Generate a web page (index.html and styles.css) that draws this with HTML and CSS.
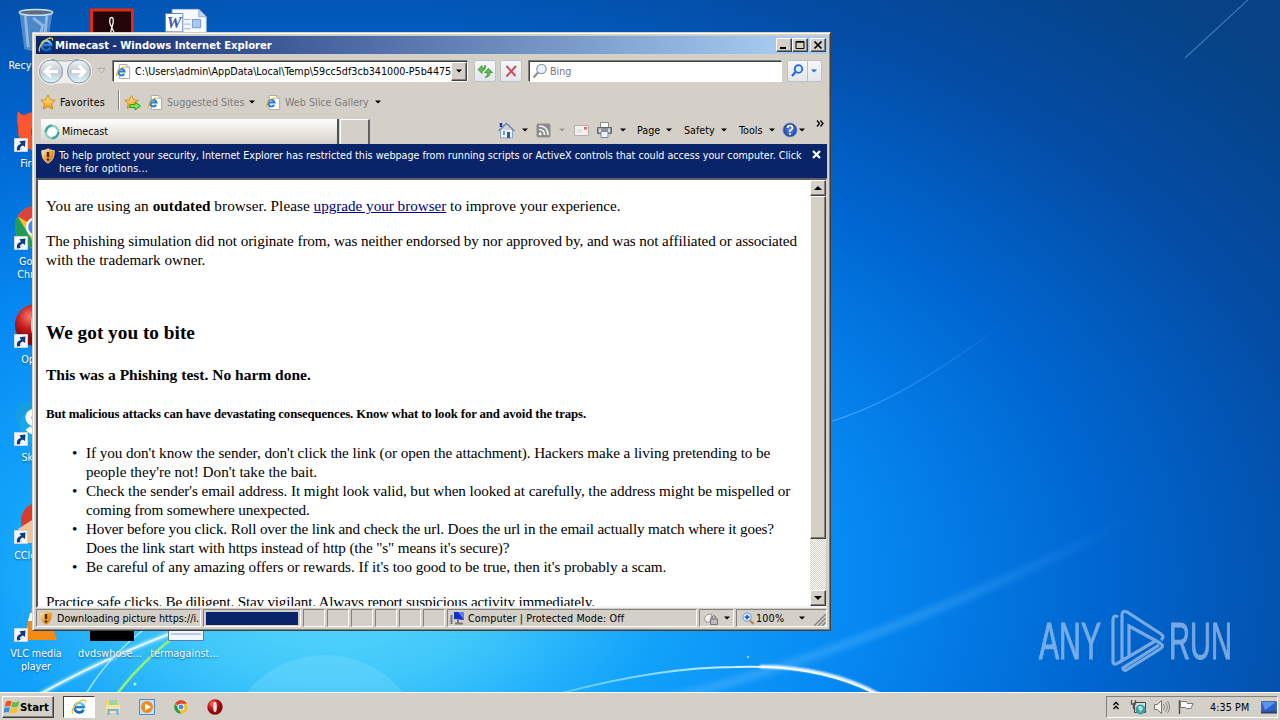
FILE: index.html
```html
<!DOCTYPE html>
<html lang="en">
<head>
<meta charset="utf-8">
<title>Mimecast - Windows Internet Explorer</title>
<link rel="stylesheet" href="styles.css">
</head>
<body>
<svg class="defs" width="0" height="0" aria-hidden="true">
  <defs>
    <linearGradient id="gIe" x1="0" y1="0" x2="0" y2="1"><stop offset="0" stop-color="#6fd0fa"/><stop offset="1" stop-color="#0a5fc0"/></linearGradient>
    <linearGradient id="gGold" x1="0" y1="0" x2="0" y2="1"><stop offset="0" stop-color="#fff0a0"/><stop offset="1" stop-color="#f09a10"/></linearGradient>
    <linearGradient id="gShield" x1="0" y1="0" x2="1" y2="1"><stop offset="0" stop-color="#fff4d8"/><stop offset=".5" stop-color="#f0a030"/><stop offset="1" stop-color="#c87010"/></linearGradient>
    <linearGradient id="gBtn" x1="0" y1="0" x2="0" y2="1"><stop offset="0" stop-color="#f4f6f8"/><stop offset=".5" stop-color="#c3cbd3"/><stop offset="1" stop-color="#dcf4fa"/></linearGradient>
    <radialGradient id="gHelp"><stop offset="0" stop-color="#5d8ee8"/><stop offset="1" stop-color="#1c3f9c"/></radialGradient>
    <radialGradient id="gRed" cx=".35" cy=".3"><stop offset="0" stop-color="#f07a70"/><stop offset=".6" stop-color="#c81a1a"/><stop offset="1" stop-color="#8a0808"/></radialGradient>
    <symbol id="ie" viewBox="0 0 16 16">
      <path d="M12.6 10.6A4.8 4.8 0 1 1 13 8H4" fill="none" stroke="url(#gIe)" stroke-width="2.6"/>
      <path d="M4 8.2h9" stroke="#1f7cd6" stroke-width="2"/>
      <path d="M2 14.4C-.5 12 4 4.500 10 1.700c3-1.300 5-.9 4.400 1.800" fill="none" stroke="#f2c230" stroke-width="1.400"/>
    </symbol>
    <symbol id="iepage" viewBox="0 0 16 16">
      <path d="M3.500.5h8l3 3v12h-11z" fill="#fff" stroke="#a8a8a8"/><path d="M11.500.5v3h3" fill="#e4e4e4" stroke="#a8a8a8"/>
      <path d="M8.800 10.500A3.500 3.500 0 1 1 9.200 8H2.500" fill="none" stroke="#1f7cd6" stroke-width="2"/>
      <path d="M1 13C-.5 11 3 5 7 3.500c2-.7 3-.3 2.800 1" fill="none" stroke="#e8b020" stroke-width="1.200"/>
    </symbol>
    <symbol id="star" viewBox="0 0 16 16"><path d="M8 1l2.200 4.700 5 .6-3.700 3.500 1 5.200L8 12.400 3.500 15l1-5.200L.8 6.300l5-.6z" fill="url(#gGold)" stroke="#d08a14" stroke-width="1"/></symbol>
    <symbol id="shield" viewBox="0 0 14 16"><path d="M7 .8C9 2 11 2.500 13.200 2.500c.2 6-1.200 10-6.200 12.700C2 12.500.6 8.500.8 2.500 3 2.500 5 2 7 .8z" fill="url(#gShield)" stroke="#d8c8a8"/><path d="M7 4v5" stroke="#4a2a00" stroke-width="2.400"/><circle cx="7" cy="11.500" r="1.300" fill="#4a2a00"/></symbol>
    <symbol id="dd" viewBox="0 0 6 4"><path d="M0 .5h6L3 3.500z" fill="currentColor"/></symbol>
    <symbol id="chrome" viewBox="0 0 48 48"><circle cx="24" cy="24" r="23" fill="#f2c42c"/><path d="M24 24L4 12.500A23 23 0 0 1 44 12.500H24z" fill="#dc4437"/><path d="M4 12.500l13 21L24 47A23 23 0 0 1 4 12.500z" fill="#1f9d58"/><circle cx="24" cy="24" r="11" fill="#fff"/><circle cx="24" cy="24" r="8.500" fill="#4285f4"/></symbol>
    <symbol id="opera" viewBox="0 0 48 48"><circle cx="24" cy="24" r="23" fill="url(#gRed)"/><ellipse cx="24" cy="24" rx="5.500" ry="16" fill="#f4dede"/></symbol>
    <symbol id="shortcut" viewBox="0 0 14 14"><path d="M.5.5h13v13H.5z" fill="#f4f8fc" stroke="#c8d4e0"/><path d="M3 12.500C2.500 8.500 4 6.500 7 6L5.500 3.200l6-.7L11 9 8.900 7.500C6.500 8 5.500 10 6.500 12z" fill="#123c80"/></symbol>
  </defs>
</svg>

<main class="desktop">
  <svg class="wallpaper" viewBox="0 0 1280 693" preserveAspectRatio="none" aria-hidden="true">
    <defs>
      <radialGradient id="sky" gradientUnits="userSpaceOnUse" cx="0" cy="0" r="1" gradientTransform="translate(330 580) scale(1250 790)">
        <stop offset="0" stop-color="#5cd8fb"/><stop offset=".13" stop-color="#40c8fa"/><stop offset=".27" stop-color="#12a2fa"/><stop offset=".42" stop-color="#0689f3"/><stop offset=".62" stop-color="#0066d0"/><stop offset=".81" stop-color="#044ca4"/><stop offset="1" stop-color="#064284"/>
      </radialGradient>
      <linearGradient id="arc" x1="560" y1="0" x2="880" y2="0" gradientUnits="userSpaceOnUse"><stop offset="0" stop-color="#9ae6ff" stop-opacity=".5"/><stop offset=".6" stop-color="#d8f5ff"/><stop offset="1" stop-color="#fff"/></linearGradient>
      <linearGradient id="thin" x1="832" y1="0" x2="1010" y2="0" gradientUnits="userSpaceOnUse"><stop offset="0" stop-color="#68c0ff" stop-opacity=".6"/><stop offset="1" stop-color="#68c0ff" stop-opacity="0"/></linearGradient>
      <linearGradient id="band" x1="700" y1="0" x2="1130" y2="0" gradientUnits="userSpaceOnUse"><stop offset="0" stop-color="#58b8ff" stop-opacity=".5"/><stop offset=".5" stop-color="#58b8ff" stop-opacity=".4"/><stop offset="1" stop-color="#58b8ff" stop-opacity="0"/></linearGradient>
      <filter id="soft" x="-10%" y="-50%" width="120%" height="200%"><feGaussianBlur stdDeviation="3"/></filter>
      <filter id="glow" x="-10%" y="-30%" width="120%" height="160%"><feGaussianBlur stdDeviation="1"/></filter>
    </defs>
    <rect width="1280" height="693" fill="url(#sky)"/>
    <circle cx="325" cy="755" r="100" fill="#9ceaff" opacity=".22"/>
    <path d="M640 705Q850 660 1130 520" fill="none" stroke="url(#band)" stroke-width="8" filter="url(#soft)"/>
    <path d="M832 421Q905 399 1005 322" fill="none" stroke="url(#thin)" stroke-width="1.200"/>
    <path d="M1185 58L1250 -2" fill="none" stroke="#5c9cd8" stroke-width="1.200" opacity=".6"/>
    <path d="M40 694Q125 647 210 620" fill="none" stroke="#fff" stroke-width="5" opacity=".4" filter="url(#glow)"/>
    <path d="M40 694Q125 647 210 620" fill="none" stroke="#dcf8ff" stroke-width="2"/>
    <path d="M86 694Q112 650 160 618" fill="none" stroke="#c8f4ff" stroke-width="1.500" opacity=".8"/>
    <path d="M117 694Q140 663 180 632" fill="none" stroke="#90f078" stroke-width="2.500"/>
    <path d="M558 694Q660 667 735 667Q820 664 880 696" fill="none" stroke="url(#arc)" stroke-width="1.800"/>
    <path d="M760 666.500Q830 667 880 695" fill="none" stroke="#fff" stroke-width="3" filter="url(#glow)"/>
    <circle cx="748" cy="657" r="1.200" fill="#90d8ff"/><circle cx="135" cy="684" r="1.500" fill="#b8f4f4"/>
  </svg>

  <div class="icon c1 r1"><svg viewBox="0 0 40 46" class="art"><path d="M3 4l5 38q12 5 23 0l6-38z" fill="#5a92cc" opacity=".85"/><path d="M9 8l3 32M31 8l-3 32M17 10l10 8-5 18" stroke="#a8ccec" stroke-width="3" fill="none" opacity=".7"/><ellipse cx="20" cy="4.500" rx="17" ry="3" fill="#5c6c80" stroke="#c8e0f4" stroke-width="1.500"/></svg><span class="label nw">Recycle Bin</span></div>
  <div class="icon c2 r1"><svg viewBox="0 0 44 44" class="art adobe"><path d="M1.500 1.500h41v41h-41z" fill="#24060a" stroke="#e02814" stroke-width="3"/><path d="M20 26l3-11q1-6-1.500-6T20 15l5 11" fill="none" stroke="#f4f0f0" stroke-width="1.300"/></svg></div>
  <div class="icon c3 r1"><svg viewBox="0 0 48 48" class="art word"><path d="M9 1h29l8 8v38H9z" fill="#f6faff" stroke="#c0cce0"/><path d="M38 1v8h8" fill="#c4d4ec" stroke="#8ea8d0"/><path d="M22 12h7M22 17h7M22 22h7" stroke="#8fb0e0"/><path d="M31 12h9v9h-9z" fill="#a8c8f0" stroke="#6c94d0"/><path d="M1.500 5.500h19v20h-19z" fill="#fff" stroke="#5a78b8"/><text x="3" y="21" class="word-w">W</text></svg></div>
  <div class="icon c1 r2"><svg viewBox="0 0 44 44" class="art"><circle cx="24" cy="24" r="20" fill="#f05a28"/><path d="M4 4q3 4 6 4 5-3 10-1l8 6-14 22Q0 22 4 4z" fill="#ff5530"/><circle cx="28" cy="25" r="11" fill="#6b3fc0"/></svg><svg class="sc"><use href="#shortcut"/></svg><span class="label">Firefox</span></div>
  <div class="icon c1 r3"><svg class="art"><use href="#chrome"/></svg><svg class="sc"><use href="#shortcut"/></svg><span class="label">Google<br>Chrome</span></div>
  <div class="icon c1 r4"><svg class="art"><use href="#opera"/></svg><svg class="sc"><use href="#shortcut"/></svg><span class="label">Opera</span></div>
  <div class="icon c1 r5"><svg class="art" viewBox="0 0 44 44"><circle cx="15" cy="15" r="14" fill="#159fe0"/><circle cx="24" cy="25" r="18" fill="#18a9ec"/><path d="M30 13c-10-6-18 0-15 6s15 5 14 10-11 3-15-2" fill="none" stroke="#fff" stroke-width="6"/></svg><svg class="sc"><use href="#shortcut"/></svg><span class="label">Skype</span></div>
  <div class="icon c1 r6"><svg class="art" viewBox="0 0 44 44"><circle cx="26" cy="22" r="19" fill="#d83a2c"/><path d="M4 30l14-9 12 7v16H12z" fill="#f0c496"/></svg><svg class="sc"><use href="#shortcut"/></svg><span class="label">CCleaner</span></div>
  <div class="icon c1 r7"><svg class="art" viewBox="0 0 44 44"><path d="M6 31h33l4 12H2z" fill="#f58a14"/><path d="M20 2h8l8 34H11z" fill="#f28a20"/><path d="M16 16h16l2 8H14z" fill="#fff"/></svg><svg class="sc"><use href="#shortcut"/></svg><span class="label">VLC media player</span></div>
  <div class="icon c2 r7"><svg class="art dark" viewBox="0 0 44 44"><path d="M0 0h44v44H0z"/></svg><span class="label">dvdswhose...</span></div>
  <div class="icon c3 r7"><svg class="art" viewBox="0 0 36 44"><path d="M.5.500h35v43H.500z" fill="#f2f7ff" stroke="#6078b0"/><path d="M3 37h30" stroke="#7c9ce0"/></svg><span class="label">termagainst...</span></div>

  <div class="watermark" aria-label="ANY RUN"><span class="wm-text any">ANY</span><svg viewBox="0 0 56 64" class="wm-logo"><path d="M8 8q-5-3-5 3v41q0 5 5 2l5-3M12 51V6q0-5 5-3l34 22q4 3 0 6M19 47V17l31 17q5 3 0 6L18 60q-4 3-5-1l36-23M8 54l39-23" fill="none" stroke="currentColor" stroke-width="3.200"/></svg><span class="wm-text run">RUN</span></div>

  <section class="window">
    <header class="title"><svg class="i16"><use href="#ie"/></svg><h1>Mimecast - Windows Internet Explorer</h1>
      <span class="caps"><span class="btn cap"><svg viewBox="0 0 12 10"><path d="M2 8h6" stroke="#000" stroke-width="2"/></svg></span><span class="btn cap"><svg viewBox="0 0 12 10"><path d="M2 1.500h8v7H2zM2 2.200h8" fill="none" stroke="#000"/></svg></span><span class="btn cap close"><svg viewBox="0 0 12 10"><path d="M2.500 1.500l7 7M9.500 1.500l-7 7" stroke="#000" stroke-width="1.700"/></svg></span></span>
    </header>

    <div class="nav">
      <svg class="backfwd" viewBox="0 0 54 27"><path d="M13 0q14 4 28 0 13 2 13 13T41 27q-14-4-28 0Q0 24 0 13T13 0z" fill="#eef1f3" opacity=".9"/><path d="M13 1q14 4 28 0" stroke="#9ba2aa" fill="none"/><g stroke="#8695a4"><circle cx="13" cy="13.500" r="11.500" fill="url(#gBtn)"/><circle cx="41" cy="13.500" r="11.500" fill="url(#gBtn)"/></g><path d="M20 13.500H8M13 8l-6 5.500 6 5.500M34 13.500h12M41 8l6 5.500-6 5.500" stroke="#fff" stroke-width="3" fill="none"/></svg>
      <svg class="recent" viewBox="0 0 9 6"><path d="M1 .5h7L4.500 5z" fill="#ddd" stroke="#aaa"/></svg>
      <div class="field address"><svg class="i15"><use href="#iepage"/></svg><span class="url">C:\Users\admin\AppData\Local\Temp\59cc5df3cb341000-P5b4475</span><span class="btn drop"><svg class="dd"><use href="#dd"/></svg></span></div>
      <span class="tool refresh"><svg viewBox="0 0 16 16"><path d="M1 6.500L5 2.500V5h2q1-1 1-3 1.500 5-3 6V10.500z" fill="#5cc04c" stroke="#2f8f2a" stroke-width=".8"/><path d="M11.500 5.500L15.500 9.500H13q0 4.500-5 5 3-1.500 2.500-5H7.500z" fill="#5cc04c" stroke="#2f8f2a" stroke-width=".8"/></svg></span>
      <span class="tool stop"><svg viewBox="0 0 16 16"><path d="M3.500 3l9 10M13 3L3.500 13.500" fill="none" stroke="#cc4a54" stroke-width="1.900"/></svg></span>
      <div class="field search"><svg viewBox="0 0 16 16" class="i16"><circle cx="9.500" cy="6" r="4.700" fill="#e8f3fb" stroke="#8d9baa" stroke-width="1.300"/><path d="M6 9.500L1.500 14.500" stroke="#8a8a8a" stroke-width="2"/></svg><span>Bing</span></div>
      <span class="tool go"><svg viewBox="0 0 16 16"><circle cx="9.500" cy="6" r="3.800" fill="#dcecff" stroke="#2468dc" stroke-width="1.800"/><path d="M6.500 9L3 13" stroke="#2468dc" stroke-width="2.200"/></svg><span class="split"><svg class="dd"><use href="#dd"/></svg></span></span>
    </div>

    <div class="favs">
      <svg class="i16"><use href="#star"/></svg><span class="fav-label">Favorites</span><span class="sep"></span>
      <svg class="i17" viewBox="0 0 17 16"><use href="#star" width="15" height="15"/><path d="M6 10h5V7.500l5.500 4L11 15.500V13H6z" fill="#7fe05a" stroke="#2f9a1c"/></svg>
      <svg class="i15 s1"><use href="#iepage"/></svg><span class="muted sites">Suggested Sites</span><svg class="dd"><use href="#dd"/></svg>
      <svg class="i15 s2"><use href="#iepage"/></svg><span class="muted gallery">Web Slice Gallery</span><svg class="dd"><use href="#dd"/></svg>
    </div>

    <div class="tabs">
      <div class="tab"><svg viewBox="0 0 16 16" class="i16"><circle cx="8" cy="8" r="6.300" fill="#fff" stroke="#8ed0c4" stroke-width="2.400"/><path d="M1.700 8a6.300 6.300 0 0 1 6.300-6.300M14.300 8A6.300 6.300 0 0 1 8 14.300" fill="none" stroke="#48a8a0" stroke-width="2.400"/></svg><span>Mimecast</span></div><span class="newtab"></span>
      <div class="cmds">
        <svg viewBox="0 0 17 17" class="i17"><path d="M2.500 8v8h12V8" fill="#e8f0fa" stroke="#8aa0c0"/><path d="M.5 9L8.500 1.500l8 7.500" fill="none" stroke="#6888b8" stroke-width="1.500"/><path d="M3 1v4" stroke="#2038b8" stroke-width="2.500"/><path d="M9 10h3v6H9z" fill="#325c94"/><path d="M5 9h2v4H5z" fill="#7898c8"/></svg><svg class="dd h"><use href="#dd"/></svg>
        <svg viewBox="0 0 15 15" class="rss"><rect x=".5" y=".5" width="14" height="14" rx="2" fill="#8c8c8c"/><path d="M3 3q9 0 9 9M3 6.500q5.500 0 5.500 5.500" fill="none" stroke="#f2f2f2" stroke-width="1.700"/><circle cx="4.200" cy="11" r="1.400" fill="#fff"/></svg><svg class="dd dim"><use href="#dd"/></svg>
        <svg viewBox="0 0 15 11" class="mail"><path d="M.5.500h14v10H.500z" fill="#f4f2f0" stroke="#b4aeb0"/><path d="M10 2h3v2.500h-3z" fill="#d86868"/><path d="M3 5h5M3 7h5" stroke="#d8d4d4"/></svg>
        <svg viewBox="0 0 17 16" class="print"><path d="M4.500 .5h8v6h-8z" fill="#fff" stroke="#888"/><path d="M1.500 5.500h14v6h-14z" fill="#8a949c" stroke="#666"/><path d="M3 6.500h2v4H3zM12 6.500h2v4h-2z" fill="#ddd"/><path d="M5 9.500h7v6H5z" fill="#e4f5ff" stroke="#888"/></svg><svg class="dd p"><use href="#dd"/></svg>
        <span class="cmd page">Page</span><svg class="dd"><use href="#dd"/></svg><span class="cmd safety">Safety</span><svg class="dd"><use href="#dd"/></svg><span class="cmd tools">Tools</span><svg class="dd"><use href="#dd"/></svg>
        <svg viewBox="0 0 16 16" class="help"><circle cx="8" cy="8" r="7.300" fill="url(#gHelp)" stroke="#aebcd8"/><path d="M5.500 6q0-2.500 2.500-2.500T10.500 6Q10.500 7.500 8 8.500V10" fill="none" stroke="#fff" stroke-width="1.700"/><circle cx="8" cy="12" r="1.100" fill="#fff"/></svg><svg class="dd"><use href="#dd"/></svg>
        <svg class="more" viewBox="0 0 8 7"><path d="M1 .5l2.500 3L1 6.500M4.500.5L7 3.500l-2.500 3" fill="none" stroke="#000" stroke-width="1.300"/></svg>
      </div>
    </div>

    <div class="info"><svg class="shield"><use href="#shield"/></svg><p><span class="info1">To help protect your security, Internet Explorer has restricted this webpage from running scripts or ActiveX controls that could access your computer. Click</span><br><span class="info2">here for options...</span></p><svg class="x" viewBox="0 0 9 9"><path d="M1 1l7 7M8 1L1 8" stroke="#fff" stroke-width="2.200"/></svg></div>

    <div class="view">
      <article class="doc-body">
        <p class="l1"><span class="l1a">You are using an <b>outdated</b> browser. Please </span><a>upgrade your browser</a> to improve your experience.</p>
        <p class="l2"><span class="l2a">The phishing simulation did not originate from, was neither endorsed by nor approved by, and was not affiliated or associated</span><br>with the trademark owner.</p>
        <h3>We got you to bite</h3>
        <h4>This was a Phishing test. No harm done.</h4>
        <h5>But malicious attacks can have devastating consequences. Know what to look for and avoid the traps.</h5>
        <ul>
          <li><span class="b1">If you don't know the sender, don't click the link (or open the attachment). Hackers make a living pretending to be</span><br><span class="b2">people they're not! Don't take the bait.</span></li>
          <li><span class="b3">Check the sender's email address. It might look valid, but when looked at carefully, the address might be mispelled or</span><br><span class="b4">coming from somewhere unexpected.</span></li>
          <li><span class="b5">Hover before you click. Roll over the link and check the url. Does the url in the email actually match where it goes?</span><br><span class="b6">Does the link start with https instead of http (the "s" means it's secure)?</span></li>
          <li><span class="b7">Be careful of any amazing offers or rewards. If it's too good to be true, then it's probably a scam.</span></li>
        </ul>
        <p class="last">Practice safe clicks. Be diligent. Stay vigilant. Always report suspicious activity immediately.</p>
      </article>
      <div class="scroll"><span class="btn arrow"><svg viewBox="0 0 8 4"><path d="M0 4h8L4 0z"/></svg></span><span class="btn thumb"></span><span class="track"></span><span class="btn arrow"><svg viewBox="0 0 8 4"><path d="M0 0h8L4 4z"/></svg></span></div>
    </div>

    <footer class="status">
      <span class="pane msg"><svg class="shield"><use href="#shield"/></svg><span class="dl">Downloading picture https://i.</span></span>
      <span class="pane prog"><i></i></span><span class="pane s"></span><span class="pane s"></span><span class="pane s"></span><span class="pane s"></span><span class="pane s"></span><span class="pane s"></span>
      <span class="pane zone"><svg viewBox="0 0 16 14"><path d="M4 1h10v8L4 8z" fill="#1530c8"/><path d="M8 1h6v8z" fill="#5a80f0"/><path d="M1.500 4v9M8 9v3M5 12.500h8" stroke="#777" stroke-width="2"/></svg><span class="zt">Computer | Protected Mode: Off</span></span>
      <span class="pane priv"><svg viewBox="0 0 16 14" class="lock"><path d="M1 7q3-5 8-4l-2 8H3z" fill="#f0f0f0" stroke="#999"/><path d="M7.500 8h7v5.500h-7zM9 8V6q2-3 4 0v2" fill="#bbb" stroke="#777"/></svg><svg class="dd"><use href="#dd"/></svg></span>
      <span class="pane zoom"><svg viewBox="0 0 14 14" class="glass"><circle cx="5.500" cy="5.500" r="4.500" fill="#e0f0ff" stroke="#5a94dc"/><path d="M5.500 3v5M3 5.500h5" stroke="#1858c8" stroke-width="1.700"/><path d="M8.500 9l4 4" stroke="#b08050" stroke-width="2.200"/></svg><span class="pct">100%</span><svg class="dd"><use href="#dd"/></svg><svg viewBox="0 0 12 12" class="grip"><path d="M0 12L12 0M4 12l8-8M8 12l4-4" stroke="#808080" stroke-width="1.400"/></svg></span>
    </footer>
  </section>
</main>

<nav class="taskbar">
  <span class="btn start"><svg viewBox="0 0 16 16"><path d="M2 3q3-2 5.500-.5L6.300 7.500Q4 6.500.8 8z" fill="#e8502c"/><path d="M8.500 2.800Q12 4.500 15.500 2l-1.300 5q-3 2-6.900.7z" fill="#6cb83a"/><path d="M.5 9Q3.500 7.500 6 8.600L4.800 13.500Q2.500 12.500-.5 14z" fill="#3d8edc"/><path d="M7 8.800q4 1.300 7-.6l-1.300 5q-3 2-7 .6z" fill="#f4c22c"/></svg><b>Start</b></span>
  <span class="task active"><svg><use href="#ie"/></svg></span>
  <span class="task"><svg viewBox="0 0 16 16"><path d="M1 2h5l1 2h7v9H1z" fill="#f2d46c"/><path d="M4 1h8v6H4z" fill="#9ad6a8"/><path d="M1 6h14v8H1z" fill="#f8e49c"/><path d="M3.500 16v-5h9v5" fill="none" stroke="#6cb4e4" stroke-width="2.200"/></svg></span>
  <span class="task"><svg viewBox="0 0 16 16"><path d="M.5.500h15v15H.500z" fill="#c4e2fa" stroke="#4c8cd0"/><circle cx="8" cy="8" r="6" fill="#f58a1c"/><path d="M6 4.500v7L12 8z" fill="#fff"/></svg></span>
  <span class="task small"><svg><use href="#chrome"/></svg></span>
  <span class="task"><svg><use href="#opera"/></svg></span>
  <div class="tray">
    <svg class="chev" viewBox="0 0 6 9"><path d="M.5 4L3 1.200 5.500 4M.5 8L3 5.200 5.500 8" fill="none" stroke="#000" stroke-width="1.300"/></svg>
    <svg class="net" viewBox="0 0 16 16"><path d="M4.500 3.500h11v10h-11z" fill="#d4e4e4" stroke="#444"/><path d="M1.500 1v4h4V1M3.500 5v5" fill="none" stroke="#555" stroke-width="1.300"/><circle cx="10.500" cy="10.500" r="5" fill="#40a0a4"/><path d="M8 8q4-3 5 2l-3 3z" fill="#a8e8d8"/></svg>
    <svg class="vol" viewBox="0 0 16 16"><path d="M.5 5.500h3l4-4v13l-4-4h-3z" fill="#f4f4f4" stroke="#777"/><path d="M9.500 5q2 3 0 6M11.500 3.500q3.500 4.500 0 9M13.500 2q4 6 0 12" fill="none" stroke="#888"/></svg>
    <svg class="flag" viewBox="0 0 16 16"><path d="M1.500 1v14" stroke="#555" stroke-width="1.500"/><path d="M2.500 2.500h6l1 2h5.500l-2 5H8.500l-1-1h-5z" fill="#fafafa" stroke="#777"/></svg>
    <span class="clock">4:35 PM</span>
    <svg class="show" viewBox="0 0 16 13"><path d="M.5.500h15v10H.500z" fill="#2860d0" stroke="#50688c"/><path d="M1 1h14L4 9z" fill="#5c94ec"/><path d="M0 11.500h16" stroke="#28406c" stroke-width="2"/></svg>
  </div>
</nav>
</body>
</html>
```

FILE: styles.css
```css
* { box-sizing: border-box; }
body { margin: 0; width: 1280px; height: 720px; overflow: hidden; display: flex; flex-direction: column; background: #d4d0c8; color: #000; font: 10.670px/13px "DejaVu Sans Condensed", "DejaVu Sans", sans-serif; }
svg { display: block; flex: none; }
p, h1, h3, h4, h5, ul { margin: 0; padding: 0; }
.defs { position: absolute; }

.desktop { position: relative; flex: none; height: 692px; overflow: hidden; }
.wallpaper { width: 1280px; height: 693px; }
.btn { display: flex; align-items: center; justify-content: center; flex: none; background: #d4d0c8; border: 1px solid; border-color: #fff #404040 #404040 #fff; box-shadow: inset -1px -1px #808080; }
.i16 { width: 16px; height: 16px; }
.i15 { width: 15px; height: 15px; }
.i17 { width: 17px; height: 17px; }
.dd { width: 6px; height: 4px; }

/* Desktop icons */
.icon { position: absolute; width: 76px; display: flex; flex-direction: column; align-items: center; color: #fff; text-align: center; }
.c1 { left: -2px; }
.c2 { left: 72px; }
.c3 { left: 148px; }
.r1 { top: 8px; }
.r2 { top: 107px; }
.r3 { top: 205px; }
.r4 { top: 303px; }
.r5 { top: 401px; }
.r6 { top: 499px; }
.r7 { top: 597px; }
.art { width: 44px; height: 44px; margin-bottom: 6px; }
.r1 .art { height: 45px; }
.c2 .art { margin-left: 3px; }
.word-w { font: italic bold 18px "Liberation Serif", serif; fill: #3a5cae; }
.sc { position: absolute; left: 16px; top: 31px; width: 14px; height: 14px; }
.label { width: 66px; text-shadow: 0 1px 2px #0458a0; }
.nw, .c2 .label, .c3 .label { width: auto; white-space: nowrap; }
.c2 .label, .c3 .label { letter-spacing: .1px; }
.c3 .label { margin-left: -3px; }

.watermark { position: absolute; left: 1039px; top: 608px; display: flex; align-items: center; color: #a4c6ee; opacity: .72; }
.wm-text { font: 52px/66px "Liberation Sans", sans-serif; display: block; transform-origin: left center; transform: scaleX(.58); -webkit-text-stroke: 1px; }
.any { width: 71px; }
.run { width: 62px; transform: scaleX(.56); }
.wm-logo { width: 56px; height: 64px; margin-right: 3px; }

/* Browser window */
.window { position: absolute; left: 32px; top: 32px; width: 799px; height: 599px; padding: 3px; display: flex; flex-direction: column; background: #d4d0c8; border: 1px solid; border-color: #d4d0c8 #404040 #404040 #d4d0c8; box-shadow: inset 1px 1px #fff, inset -1px -1px #808080; }
.title { height: 18px; flex: none; display: flex; align-items: center; padding: 0 1px 0 2px; background: linear-gradient(90deg, #0a246a, #a6caf0 94%); color: #fff; }
.title h1 { margin-left: 1px; font-size: 11.150px; font-weight: bold; white-space: nowrap; }
.caps { display: flex; margin-left: auto; }
.cap { width: 16px; height: 14px; }
.cap svg { width: 12px; height: 10px; }
.close { margin-left: 2px; }

.nav { height: 34px; flex: none; display: flex; align-items: center; padding-left: 2px; }
.backfwd { width: 54px; height: 27px; }
.recent { width: 9px; height: 6px; margin: 0 7px 0 5px; }
.field { display: flex; align-items: center; height: 21px; background: #fff; border: 1px solid; border-color: #404040 #fff #fff #404040; box-shadow: -1px -1px #808080; }
.address { width: 355px; padding-left: 2px; }
.url { width: 316px; margin-left: 4px; overflow: hidden; white-space: nowrap; }
.drop { width: 16px; height: 19px; }
.tool { display: flex; align-items: center; justify-content: center; width: 22px; height: 22px; border: 1px solid #bcc2c8; border-radius: 2px; background: linear-gradient(#f6f7f8, #e3e7ea); }
.tool > svg { width: 16px; height: 16px; }
.refresh { margin-left: 6px; }
.stop { margin-left: 4px; }
.search { width: 253px; margin-left: 7px; padding-left: 2px; color: #777; }
.search span { margin-left: 2px; }
.go { width: 35px; margin-left: 5px; color: #2468dc; justify-content: flex-start; padding-left: 1px; }
.split { display: flex; align-items: center; height: 20px; margin-left: 2px; padding-left: 3px; border-left: 1px solid #bcc2c8; }

.favs { height: 28px; flex: none; display: flex; align-items: center; padding-left: 4px; white-space: nowrap; }
.fav-label { width: 46px; margin-left: 4px; letter-spacing: .2px; }
.sep { width: 2px; height: 20px; margin: -4px 4px 0 12px; border-left: 1px solid #808080; border-right: 1px solid #fff; }
.s1 { margin-left: 7px; }
.s2 { margin-left: 11px; }
.muted { color: #7c7c7c; margin-left: 4px; }
.sites { width: 78px; margin-right: 4px; }
.gallery { width: 83px; margin-right: 7px; }

.tabs { height: 28px; flex: none; display: flex; padding: 3px 0 0 5px; }
.tab { width: 298px; display: flex; align-items: center; padding-left: 3px; background: linear-gradient(#fff, #d4d0c8); border-right: 2px solid #505050; }
.tab span { margin-left: 2px; }
.newtab { width: 30px; margin-left: 1px; border: solid; border-width: 1px 2px 0 1px; border-color: #fff #606060 #fff #fff; }
.cmds { display: flex; align-items: center; margin-left: 128px; padding-bottom: 3px; }
.h { margin: 0 8px 0 7px; }
.rss { width: 15px; height: 15px; }
.dim { color: #999; margin: 0 9px 0 8px; }
.mail { width: 15px; height: 11px; }
.print { width: 17px; height: 16px; margin-left: 7px; }
.p { margin: 0 11px 0 7px; }
.cmd { margin-right: 4px; }
.page { width: 25px; }
.safety { width: 33px; margin-left: 12px; }
.tools { width: 26px; margin-left: 12px; }
.help { width: 16px; height: 16px; margin: 0 1px 0 7px; }
.more { width: 8px; height: 7px; margin: -14px 0 0 11px; }

.info { height: 34px; flex: none; display: flex; align-items: flex-start; padding: 4px 5px 0 5px; background: #0a246a; color: #fff; white-space: nowrap; }
.shield { width: 14px; height: 16px; }
.info p { width: 746px; margin-left: 4px; padding-top: 1px; }
.info2 { letter-spacing: .2px; }
.x { width: 9px; height: 9px; margin: 2px 0 0 7px; }

/* Page */
.view { height: 430px; flex: none; display: flex; border: solid; border-width: 2px 1px 2px 2px; border-color: #606060 #d4d0c8 #f4f4f4 #505050; background: #fff; overflow: hidden; }
.doc-body { width: 772px; height: 426px; overflow: hidden; padding: 16px 0 0 8px; font: 15.200px/19px "Liberation Serif", "Times New Roman", serif; white-space: nowrap; }
.l1 { letter-spacing: -.030px; }
.l1a { letter-spacing: .060px; }
.l2 { margin-top: 16px; }
.l2a { letter-spacing: -.100px; }
.doc-body a { color: #000080; text-decoration: underline; }
h3 { margin-top: 53px; font-size: 19.300px; line-height: 22px; }
h4 { margin-top: 21px; font-size: 15.500px; line-height: 19px; }
h5 { margin-top: 22px; font-size: 12.800px; line-height: 16px; letter-spacing: -.120px; }
.doc-body ul { margin-top: 21px; padding-left: 40px; list-style: none; }
.doc-body li::before { content: "•"; display: inline-block; width: 14px; margin-left: -14px; }
.b1 { letter-spacing: -.070px; }
.b2 { letter-spacing: -.020px; }
.b3 { letter-spacing: -.080px; }
.b4 { letter-spacing: -.150px; }
.b5 { letter-spacing: -.140px; }
.b6 { letter-spacing: -.130px; }
.b7 { letter-spacing: -.060px; }
.last { margin-top: 16px; letter-spacing: -.200px; }
.scroll { width: 16px; display: flex; flex-direction: column; background: #ebe8e3; }
.arrow { height: 16px; }
.arrow svg { width: 8px; height: 4px; }
.thumb { height: 343px; }
.track { flex: 1; background: repeating-conic-gradient(#fff 0 25%, #d4d0c8 0 50%) 0 0 / 2px 2px; }

.status { height: 19px; flex: none; display: flex; gap: 2px; align-items: flex-end; white-space: nowrap; }
.pane { height: 18px; display: flex; align-items: center; overflow: hidden; border: 1px solid; border-color: #808080 #fff #fff #808080; }
.dl, .zt, .pct { padding-top: 1px; }
.msg { width: 165px; padding-left: 2px; }
.dl { width: 143px; margin-left: 4px; overflow: hidden; }
.prog { width: 98px; padding: 1px 2px; }
.prog i { width: 93px; height: 13px; background: #0a246a; }
.s { width: 22px; }
.zone { width: 250px; padding-left: 2px; }
.zone svg { width: 16px; height: 14px; margin-right: 2px; }
.zt { letter-spacing: .120px; }
.priv { width: 35px; padding-left: 3px; gap: 5px; }
.lock { width: 16px; height: 14px; }
.zoom { flex: 1; padding-left: 5px; }
.glass { width: 13px; height: 13px; }
.pct { width: 30px; margin: 0 15px 0 1px; letter-spacing: .2px; }
.grip { width: 12px; height: 12px; margin: 4px 0 0 9px; }

/* Taskbar */
.taskbar { height: 28px; flex: none; display: flex; align-items: center; padding: 1px 2px 0 2px; background: #d4d0c8; border-top: 1px solid #fff; }
.start { width: 52px; height: 22px; justify-content: flex-start; padding-left: 1px; }
.start b { font-size: 11.300px; }
.start svg { width: 16px; height: 16px; }
.task { width: 32px; height: 22px; margin-right: 2px; display: flex; align-items: center; justify-content: center; }
.task svg { width: 16px; height: 16px; }
.small svg { width: 14px; height: 14px; }
.active { margin-left: 9px; background: #fff; border: 1px solid; border-color: #404040 #fff #fff #404040; }
.tray { width: 172px; height: 22px; margin-left: auto; display: flex; align-items: center; border: 1px solid; border-color: #808080 #fff #fff #808080; }
.chev { width: 6px; height: 9px; margin: -3px 0 0 6px; }
.net { width: 16px; height: 16px; margin-left: 11px; }
.vol { width: 16px; height: 16px; margin-left: 8px; }
.flag { width: 16px; height: 16px; margin-left: 8px; }
.clock { width: 42px; margin-left: 16px; white-space: nowrap; letter-spacing: .1px; }
.show { width: 16px; height: 13px; margin-left: 9px; }
```
